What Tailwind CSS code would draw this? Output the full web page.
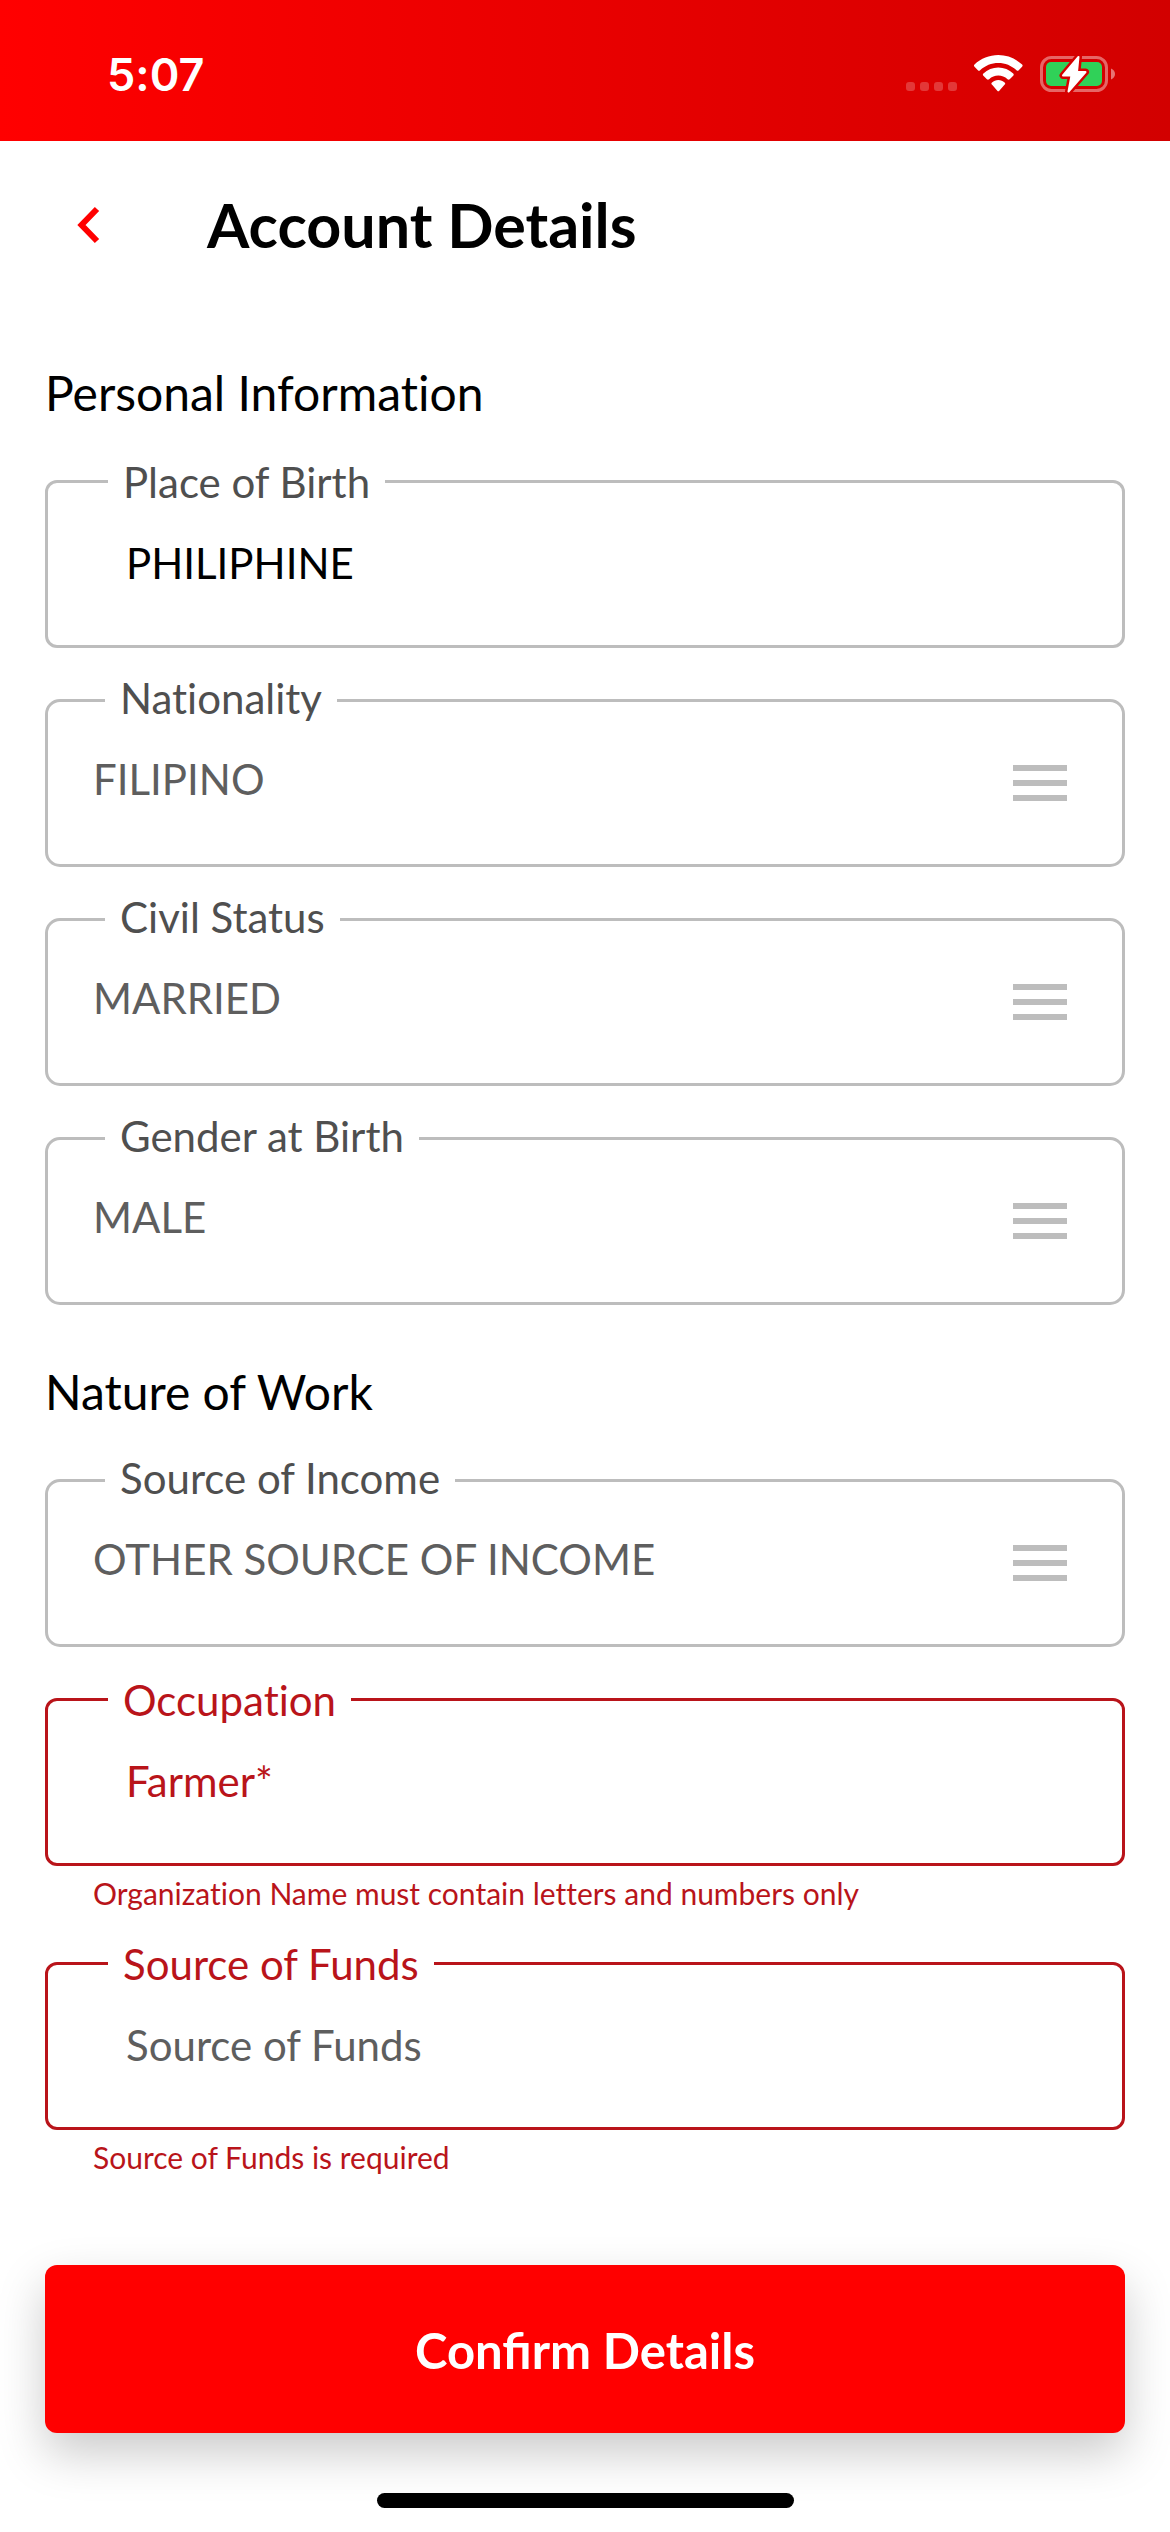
<!DOCTYPE html>
<html lang="en">
<head>
<meta charset="utf-8">
<meta name="viewport" content="width=device-width, initial-scale=1">
<title>Account Details</title>
<script src="https://cdn.jsdelivr.net/npm/@tailwindcss/browser@4"></script>
</head>
<body class="bg-white font-['Lato',sans-serif] text-black [font-variant-ligatures:none]">
<div class="flex min-h-screen flex-col">
  <!-- Status bar -->
  <header class="flex h-[141px] items-center justify-between bg-linear-to-r from-[#ff0000] to-[#d20000] pr-[54px] pl-[107px] text-white">
    <span class="pt-[9px] font-['Inter',sans-serif] text-[45px] leading-[54px] font-semibold">5:07</span>
    <div class="flex items-center gap-[17px] pt-[7px]">
      <svg class="h-[38px] w-[51px]" viewBox="0 0 51 38" fill="#fff" fill-opacity=".22" aria-hidden="true">
        <rect x="0" y="27" width="9" height="9" rx="3"/><rect x="14" y="27" width="9" height="9" rx="3"/><rect x="28" y="27" width="9" height="9" rx="3"/><rect x="42" y="27" width="9" height="9" rx="3"/>
      </svg>
      <svg class="h-[38px] w-[49px]" viewBox="0 0 49 38" fill="#fff" aria-label="Wi-Fi">
        <path d="M24.3 0C15.4 0 6.900 3.500.5 9.500c-.7.700-.7 1.500 0 2.200l3.400 3.500c.7.700 1.500.700 2.200 0C11.100 10.600 17.500 8 24.300 8s13.200 2.600 18.200 7.200c.7.700 1.500.700 2.200 0l3.400-3.500c.7-.7.700-1.500 0-2.200C41.700 3.500 33.200 0 24.300 0z"/>
        <path d="M24.300 12.500c-5.600 0-10.900 2.200-14.900 6-.7.700-.7 1.500 0 2.200l3.500 3.500c.7.600 1.500.600 2.200 0 2.500-2.300 5.800-3.600 9.200-3.600s6.700 1.300 9.200 3.600c.7.600 1.500.600 2.200 0l3.500-3.500c.7-.7.700-1.500 0-2.200-4-3.800-9.300-6-14.900-6z"/>
        <path d="M24.300 25c-2.400 0-4.600.9-6.300 2.400-.8.700-.8 1.500-.1 2.200l5.400 6.100c.6.700 1.400.700 2 0l5.400-6.100c.7-.7.700-1.500-.1-2.200-1.700-1.500-3.900-2.400-6.300-2.400z"/>
      </svg>
      <svg class="h-[38px] w-[76px]" viewBox="1040 55 76 38" aria-label="Battery charging">
        <rect x="1041.500" y="57.500" width="65" height="33" rx="10" fill="none" stroke="#fff" stroke-opacity=".4" stroke-width="3"/>
        <path d="M1111 68.500c2.600 1 4 3 4 5.500s-1.400 4.500-4 5.500z" fill="#fff" fill-opacity=".45"/>
        <rect x="1046" y="62" width="56" height="24" rx="5" fill="#30d158"/>
        <path d="M1078.500 57L1063 75.500h8.500l-3 16 17-19.500h-8.500z" fill="#d60000" stroke="#d60000" stroke-width="7" stroke-linejoin="round"/>
        <path d="M1078.500 57L1063 75.500h8.500l-3 16 17-19.500h-8.500z" fill="#fff" stroke="#fff" stroke-width="2" stroke-linejoin="round"/>
      </svg>
    </div>
  </header>

  <nav class="flex items-center pt-[48px] pr-[45px] pl-[75px]">
    <button type="button" aria-label="Back" class="flex h-[48px] w-[132px] items-center">
      <svg class="h-[42px] w-[27px]" viewBox="0 0 27 42" fill="none" stroke="#f00" stroke-width="6" aria-hidden="true"><path d="M22 5L6.500 21 22 37"/></svg>
    </button>
    <h1 class="text-[61px] leading-[72px] font-bold">Account Details</h1>
  </nav>

  <form class="flex flex-col px-[45px] pt-[45px]">
    <h2 class="my-[58px] text-[48px] leading-[58px]">Personal Information</h2>
    <div class="flex flex-col gap-[51px]">
      <div class="relative rounded-[12px] border-3 border-[#bdbdbd]">
        <label for="birthplace" class="absolute top-[-26px] left-[60px] bg-white px-[15px] text-[42px] leading-[50px] text-[#4f4f4f]">Place of Birth</label>
        <input id="birthplace" type="text" value="PHILIPHINE" class="block h-[162px] w-full bg-transparent pt-[55px] pr-[45px] pb-[57px] pl-[78px] text-[42px] leading-[50px] text-black outline-none">
      </div>
      <div class="relative rounded-[15px] border-3 border-[#bdbdbd]">
        <label for="nationality" class="absolute top-[-29px] left-[57px] bg-white px-[15px] text-[42px] leading-[50px] text-[#4f4f4f]">Nationality</label>
        <select id="nationality" class="block h-[162px] w-full appearance-none bg-transparent pt-[52px] pr-[120px] pb-[60px] pl-[45px] text-[42px] leading-[50px] text-[#5e5e5e] outline-none"><option>FILIPINO</option></select>
        <svg class="pointer-events-none absolute top-[63px] right-[55px] h-[36px] w-[54px]" viewBox="0 0 54 36" fill="#bdbdbd" aria-hidden="true"><path d="M0 0h54v6H0zM0 15h54v6H0zM0 30h54v6H0z"/></svg>
      </div>
      <div class="relative rounded-[15px] border-3 border-[#bdbdbd]">
        <label for="civil" class="absolute top-[-29px] left-[57px] bg-white px-[15px] text-[42px] leading-[50px] text-[#4f4f4f]">Civil Status</label>
        <select id="civil" class="block h-[162px] w-full appearance-none bg-transparent pt-[52px] pr-[120px] pb-[60px] pl-[45px] text-[42px] leading-[50px] text-[#5e5e5e] outline-none"><option>MARRIED</option></select>
        <svg class="pointer-events-none absolute top-[63px] right-[55px] h-[36px] w-[54px]" viewBox="0 0 54 36" fill="#bdbdbd" aria-hidden="true"><path d="M0 0h54v6H0zM0 15h54v6H0zM0 30h54v6H0z"/></svg>
      </div>
      <div class="relative rounded-[15px] border-3 border-[#bdbdbd]">
        <label for="gender" class="absolute top-[-29px] left-[57px] bg-white px-[15px] text-[42px] leading-[50px] text-[#4f4f4f]">Gender at Birth</label>
        <select id="gender" class="block h-[162px] w-full appearance-none bg-transparent pt-[52px] pr-[120px] pb-[60px] pl-[45px] text-[42px] leading-[50px] text-[#5e5e5e] outline-none"><option>MALE</option></select>
        <svg class="pointer-events-none absolute top-[63px] right-[55px] h-[36px] w-[54px]" viewBox="0 0 54 36" fill="#bdbdbd" aria-hidden="true"><path d="M0 0h54v6H0zM0 15h54v6H0zM0 30h54v6H0z"/></svg>
      </div>
    </div>

    <h2 class="my-[58px] text-[48px] leading-[58px]">Nature of Work</h2>
    <div class="flex flex-col gap-[51px]">
      <div class="relative rounded-[15px] border-3 border-[#bdbdbd]">
        <label for="income" class="absolute top-[-29px] left-[57px] bg-white px-[15px] text-[42px] leading-[50px] text-[#4f4f4f]">Source of Income</label>
        <select id="income" class="block h-[162px] w-full appearance-none bg-transparent pt-[52px] pr-[120px] pb-[60px] pl-[45px] text-[42px] leading-[50px] text-[#5e5e5e] outline-none"><option>OTHER SOURCE OF INCOME</option></select>
        <svg class="pointer-events-none absolute top-[63px] right-[55px] h-[36px] w-[54px]" viewBox="0 0 54 36" fill="#bdbdbd" aria-hidden="true"><path d="M0 0h54v6H0zM0 15h54v6H0zM0 30h54v6H0z"/></svg>
      </div>
      <div>
        <div class="relative rounded-[12px] border-3 border-[#b9141a]">
          <label for="occupation" class="absolute top-[-26px] left-[60px] bg-white px-[15px] text-[42px] leading-[50px] text-[#b9141a]">Occupation</label>
          <input id="occupation" type="text" value="Farmer*" aria-describedby="occupation-error" class="block h-[162px] w-full bg-transparent pt-[55px] pr-[45px] pb-[57px] pl-[78px] text-[42px] leading-[50px] text-[#b9141a] outline-none">
        </div>
        <p id="occupation-error" class="mt-[9px] pl-[48px] text-[30px] leading-[36px] text-[#b9141a]">Organization Name must contain letters and numbers only</p>
      </div>
      <div>
        <div class="relative rounded-[12px] border-3 border-[#b9141a]">
          <label for="funds" class="absolute top-[-26px] left-[60px] bg-white px-[15px] text-[42px] leading-[50px] text-[#b9141a]">Source of Funds</label>
          <input id="funds" type="text" placeholder="Source of Funds" aria-describedby="funds-error" class="block h-[162px] w-full bg-transparent pt-[55px] pr-[45px] pb-[57px] pl-[78px] text-[42px] leading-[50px] text-black outline-none placeholder:text-[#5e5e5e]">
        </div>
        <p id="funds-error" class="mt-[9px] pl-[48px] text-[30px] leading-[36px] text-[#b9141a]">Source of Funds is required</p>
      </div>
    </div>
    <button type="submit" class="mt-[90px] rounded-[12px] bg-[#ff0000] pt-[56px] pb-[54px] text-[49px] leading-[58px] font-bold text-white shadow-[0_20px_48px_rgba(0,0,0,0.21)] [font-variant-ligatures:normal]">Confirm Details</button>
  </form>

  <div class="relative mx-auto mt-[60px] mb-[24px] h-[15px] w-[417px] rounded-full bg-black"></div>
</div>
</body>
</html>
